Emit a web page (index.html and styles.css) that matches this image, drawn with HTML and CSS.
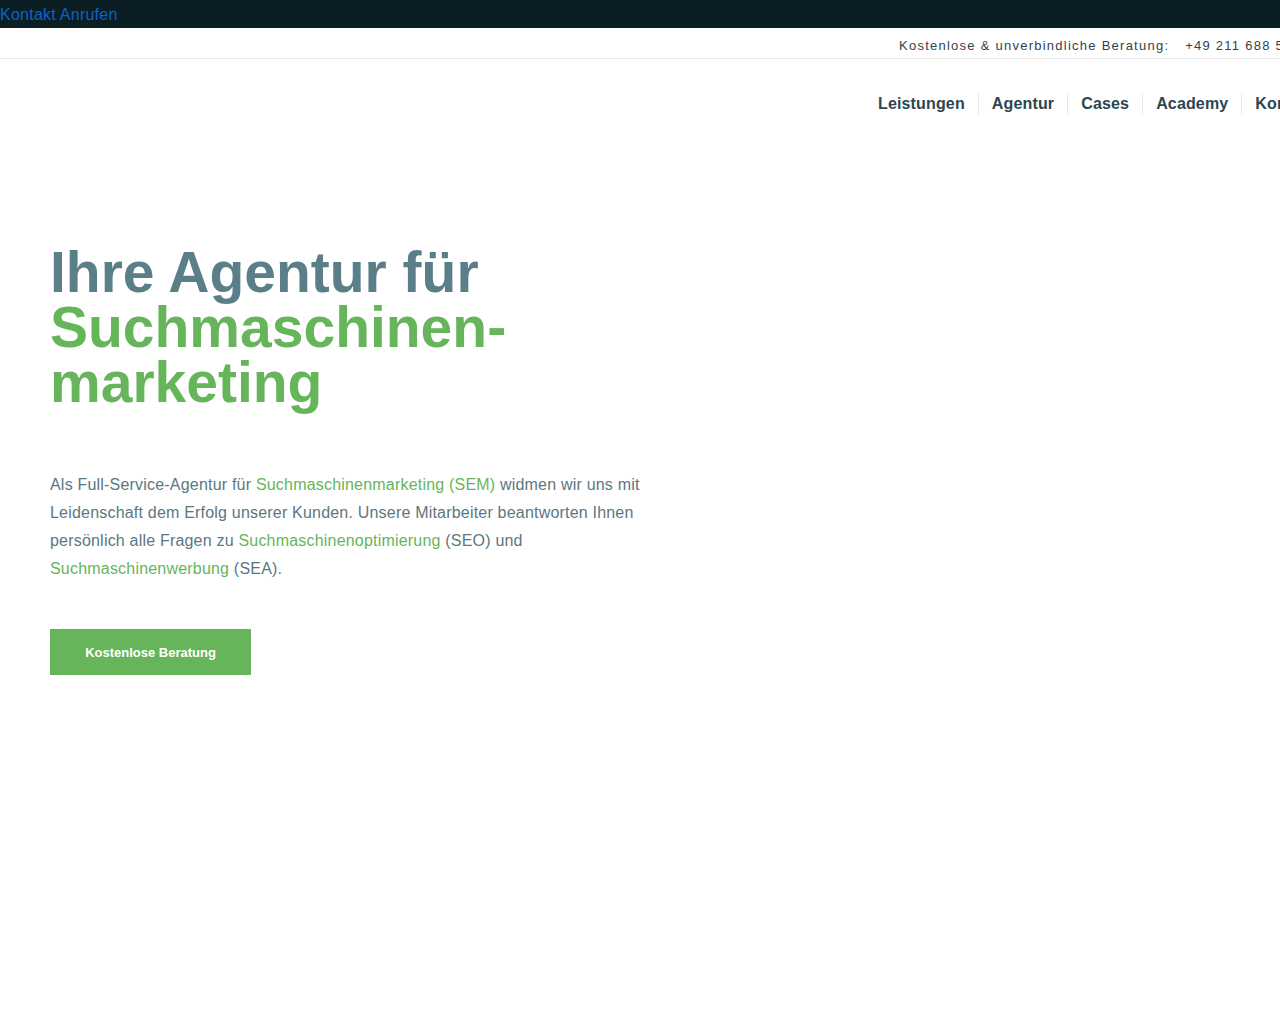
FILE: index.html
```html
<!DOCTYPE html>
<html lang="de">
<head>
<meta charset="utf-8">
<title>Agentur für Suchmaschinenmarketing</title>
<link rel="stylesheet" href="styles.css">
</head>
<body>
<div class="callbar"><a href="#" class="call-link">Kontakt Anrufen</a></div>
<div class="infobar">
  <div class="info-inner">
    <span class="info-label">Kostenlose &amp; unverbindliche Beratung:</span>
    <span class="info-phone">+49 211 688 578 0</span>
  </div>
</div>
<header class="header">
  <nav class="nav">
    <a href="#" class="nav-item">Leistungen</a>
    <a href="#" class="nav-item">Agentur</a>
    <a href="#" class="nav-item">Cases</a>
    <a href="#" class="nav-item">Academy</a>
    <a href="#" class="nav-item">Kontakt</a>
  </nav>
</header>
<main class="hero">
  <h1 class="hero-title"><span class="t-grey">Ihre Agentur für</span><br><span class="t-green">Suchmaschinen-<br>marketing</span></h1>
  <p class="hero-text">Als Full-Service-Agentur für <a href="#" class="g-link">Suchmaschinenmarketing (SEM)</a> widmen wir uns mit Leidenschaft dem Erfolg unserer Kunden. Unsere Mitarbeiter beantworten Ihnen persönlich alle Fragen zu <a href="#" class="g-link">Suchmaschinenoptimierung</a> (SEO) und <a href="#" class="g-link">Suchmaschinenwerbung</a> (SEA).</p>
  <a href="#" class="btn">Kostenlose Beratung</a>
</main>
</body>
</html>
```
FILE: styles.css
```css
html, body {
  margin: 0;
  padding: 0;
  background: #ffffff;
  font-family: "Liberation Sans", Arial, sans-serif;
  overflow-x: hidden;
}
.callbar {
  background: #0b1e24;
  height: 28px;
  line-height: 29px;
  font-size: 16px;
  letter-spacing: 0.25px;
}
.call-link {
  color: #0a64c8;
  text-decoration: none;
}
.infobar {
  height: 30px;
  border-bottom: 1px solid #e6e6e6;
  overflow: hidden;
}
.info-inner {
  padding-left: 899px;
  white-space: nowrap;
  font-size: 13px;
  letter-spacing: 1.25px;
  line-height: 36px;
  color: #33434a;
}
.info-phone {
  margin-left: 11px;
}
.header {
  height: 89px;
  overflow: hidden;
}
.nav {
  display: flex;
  padding-left: 865px;
  padding-top: 34px;
  white-space: nowrap;
}
.nav-item {
  flex: none;
  font-size: 16px;
  font-weight: bold;
  letter-spacing: 0.15px;
  color: #2b4651;
  text-decoration: none;
  padding: 0 13px;
  line-height: 22px;
  border-left: 1px solid #e8e8e8;
}
.nav-item:first-child {
  border-left: none;
}
.hero {
  padding: 97px 50px 0;
}
.hero-title {
  margin: 0;
  font-size: 57px;
  line-height: 55px;
  font-weight: bold;
}
.t-grey { color: #5a7f88; }
.t-green { color: #66b55b; }
.hero-text {
  width: 600px;
  margin: 61px 0 0;
  font-size: 16px;
  line-height: 28px;
  letter-spacing: 0.2px;
  color: #5b7781;
}
.g-link {
  color: #66b55b;
  text-decoration: none;
}
.btn {
  display: inline-block;
  box-sizing: border-box;
  margin-top: 46px;
  width: 201px;
  height: 46px;
  padding-top: 2px;
  line-height: 44px;
  text-align: center;
  background: #66b55b;
  color: #ffffff;
  font-size: 13px;
  font-weight: bold;
  text-decoration: none;
}
```
